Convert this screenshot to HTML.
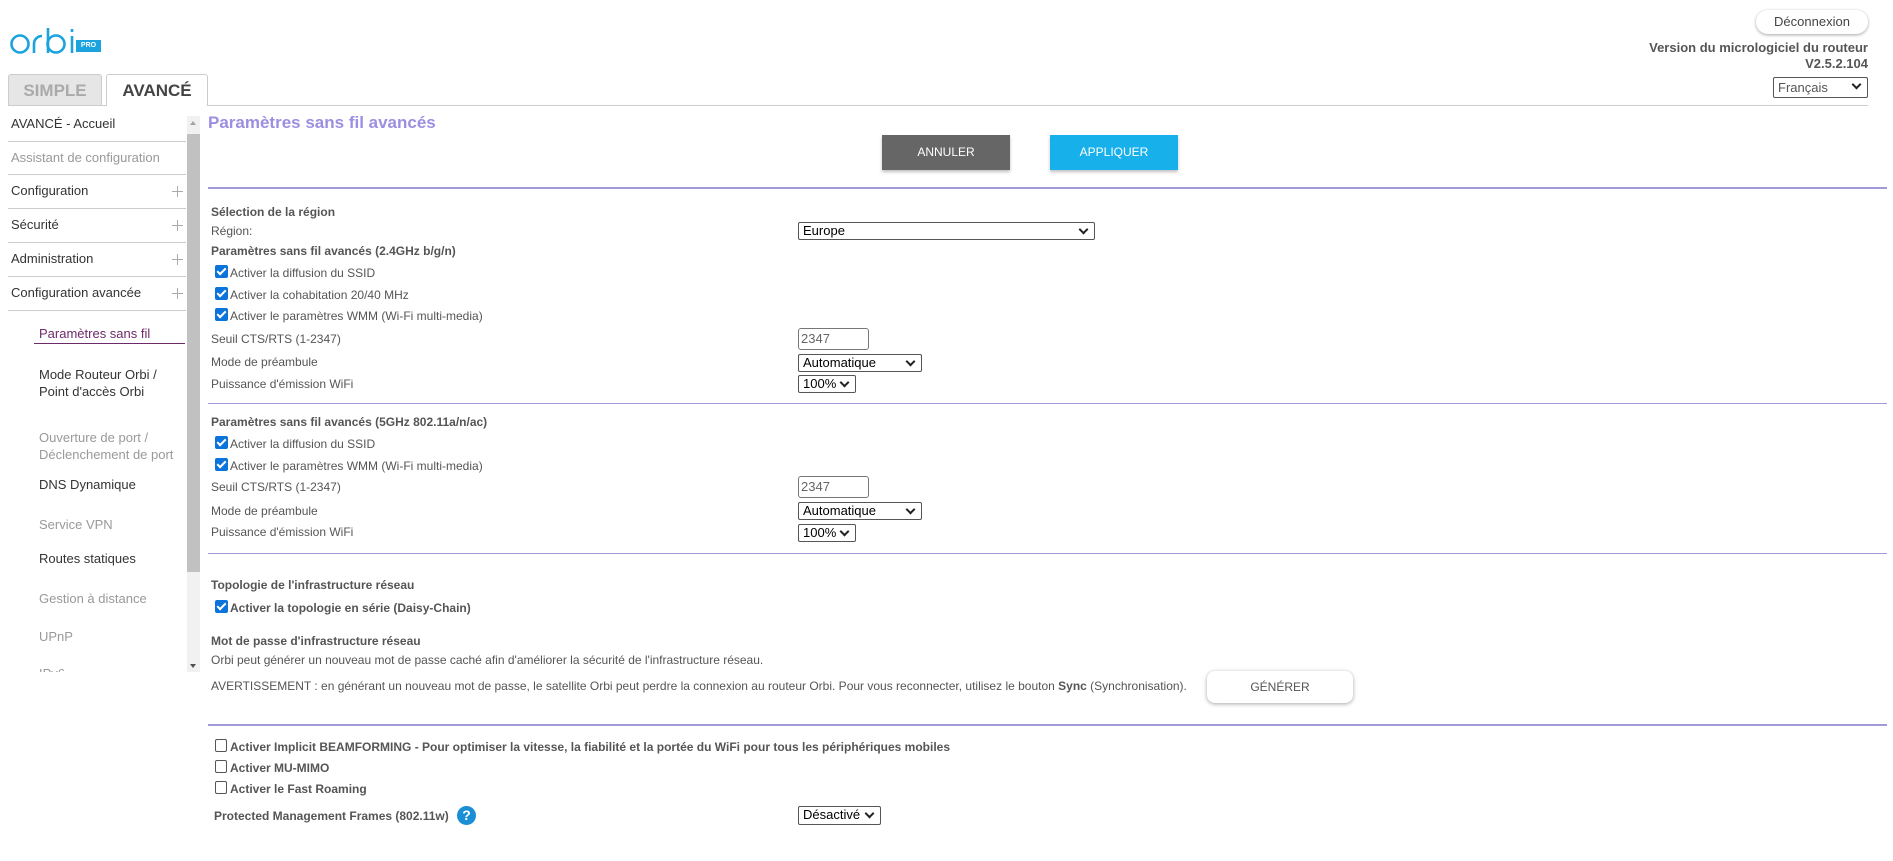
<!DOCTYPE html>
<html><head><meta charset="utf-8"><style>
*{box-sizing:border-box;margin:0;padding:0}
body{width:1893px;height:861px;background:#fff;font-family:"Liberation Sans",Arial,sans-serif;position:relative;overflow:hidden;color:#555}
.a{position:absolute;white-space:nowrap}
.t{font-size:12px;color:#555;line-height:14px}
.b{font-weight:bold}
.sb{font-size:13px;color:#333;left:11px}
.g{color:#999}
.sl{position:absolute;left:8px;width:178px;height:1px;background:#ccc}
.pl{position:absolute;left:172px;width:11px;height:11px}
.pl:before{content:"";position:absolute;left:5px;top:0;width:1px;height:11px;background:#aaa}
.pl:after{content:"";position:absolute;left:0;top:5px;width:11px;height:1px;background:#aaa}
.cb{position:absolute;width:13px;height:13px;border-radius:2px;background:#0a74da;left:215px}
.cb:after{content:"";position:absolute;left:4px;top:1px;width:3px;height:7px;border:solid #fff;border-width:0 2px 2px 0;transform:rotate(45deg)}
.ucb{position:absolute;width:12px;height:13px;border:1px solid #555;border-radius:2px;left:215px;background:#fff}
.sel{position:absolute;border:1px solid #555;border-radius:2px;font-size:13px;color:#000;padding-left:4px;line-height:16px;background:#fff}
.sel:after{content:"";position:absolute;right:7px;top:3px;width:5px;height:5px;border:solid #222;border-width:0 2px 2px 0;transform:rotate(45deg)}
.inp{position:absolute;border:1px solid #777;border-radius:3px;font-size:13px;color:#666;padding-left:2px;line-height:20px}
.hl{position:absolute;left:208px;width:1679px;background:#a09ad8}
</style></head><body>
<!-- logo -->
<svg class="a" style="left:10px;top:26px" width="68" height="30" viewBox="0 0 68 30" fill="none" stroke="#1aa3dc" stroke-width="2.6">
<circle cx="10" cy="18" r="8.5"/>
<path d="M24 27V18a8 8 0 0 1 8-8"/>
<path d="M38 2V27"/><circle cx="46" cy="18" r="8.5"/>
<path d="M62 10V27"/><path d="M62 3V6"/>
</svg>
<div class="a" style="left:76px;top:40px;width:25px;height:12px;background:#1aa3dc;color:#fff;font-size:7px;font-weight:bold;text-align:center;line-height:12px">PRO</div>
<!-- top right -->
<div class="a" style="left:1756px;top:10px;width:112px;height:24px;border-radius:12px;box-shadow:0 1px 3px rgba(0,0,0,.35);font-size:13px;color:#444;text-align:center;line-height:24px">Déconnexion</div>
<div class="a b" style="right:25px;top:40px;font-size:13px;color:#555;text-align:right;line-height:16px">Version du micrologiciel du routeur<br>V2.5.2.104</div>
<div class="sel" style="left:1773px;top:77px;width:95px;height:21px;color:#555;line-height:19px">Français</div>
<!-- tabs -->
<div class="a b" style="left:8px;top:74px;width:94px;height:32px;background:#e6e6e6;border:1px solid #ccc;border-bottom:none;border-radius:3px 3px 0 0;font-size:17px;color:#aaa;text-align:center;line-height:32px">SIMPLE</div>
<div class="a b" style="left:106px;top:74px;width:102px;height:32px;background:#fff;border:1px solid #ccc;border-bottom:none;border-radius:3px 3px 0 0;font-size:17px;color:#444;text-align:center;line-height:32px;z-index:2">AVANCÉ</div>
<div class="a" style="left:8px;top:105px;width:1860px;height:1px;background:#ccc"></div>
<!-- sidebar -->
<div class="a sb" style="top:116px">AVANCÉ - Accueil</div><div class="sl" style="top:141px"></div>
<div class="a sb g" style="top:150px">Assistant de configuration</div><div class="sl" style="top:174px"></div>
<div class="a sb" style="top:183px">Configuration</div><div class="pl" style="top:186px"></div><div class="sl" style="top:208px"></div>
<div class="a sb" style="top:217px">Sécurité</div><div class="pl" style="top:220px"></div><div class="sl" style="top:242px"></div>
<div class="a sb" style="top:251px">Administration</div><div class="pl" style="top:254px"></div><div class="sl" style="top:276px"></div>
<div class="a sb" style="top:285px">Configuration avancée</div><div class="pl" style="top:288px"></div><div class="sl" style="top:310px"></div>
<div class="a" style="left:39px;top:326px;font-size:13px;color:#6d2a6a">Paramètres sans fil</div>
<div class="a" style="left:34px;top:343px;width:151px;height:1px;background:#6d2a6a"></div>
<div class="a" style="left:39px;top:366px;font-size:13px;color:#333;line-height:17px">Mode Routeur Orbi /<br>Point d'accès Orbi</div>
<div class="a" style="left:39px;top:429px;font-size:13px;color:#999;line-height:17px">Ouverture de port /<br>Déclenchement de port</div>
<div class="a" style="left:39px;top:477px;font-size:13px;color:#333">DNS Dynamique</div>
<div class="a" style="left:39px;top:517px;font-size:13px;color:#999">Service VPN</div>
<div class="a" style="left:39px;top:551px;font-size:13px;color:#333">Routes statiques</div>
<div class="a" style="left:39px;top:591px;font-size:13px;color:#999">Gestion à distance</div>
<div class="a" style="left:39px;top:629px;font-size:13px;color:#999">UPnP</div>
<div class="a" style="left:39px;top:666px;font-size:13px;color:#999;height:6px;overflow:hidden">IPv6</div>
<div class="a" style="left:0;top:672px;width:200px;height:189px;background:#fff"></div>
<!-- scrollbar -->
<div class="a" style="left:187px;top:116px;width:13px;height:556px;background:#f1f1f1"></div>
<div class="a" style="left:187px;top:134px;width:13px;height:438px;background:#c1c1c1"></div>
<div class="a" style="left:190px;top:121px;border:3.5px solid transparent;border-bottom:4px solid #a3a3a3;border-top:none"></div>
<div class="a" style="left:190px;top:664px;border:3.5px solid transparent;border-top:4px solid #505050;border-bottom:none"></div>
<!-- main -->
<div class="a b" style="left:208px;top:113px;font-size:17px;color:#9c8fe2">Paramètres sans fil avancés</div>
<div class="a" style="left:882px;top:135px;width:128px;height:35px;background:#666;color:#fff;font-size:12px;text-align:center;line-height:35px;box-shadow:0 2px 3px rgba(0,0,0,.25)">ANNULER</div>
<div class="a" style="left:1050px;top:135px;width:128px;height:35px;background:#18b0ea;color:#fff;font-size:12px;text-align:center;line-height:35px;box-shadow:0 2px 3px rgba(0,0,0,.25)">APPLIQUER</div>
<div class="hl" style="top:187px;height:2px"></div>

<div class="a t b" style="left:211px;top:205px">Sélection de la région</div>
<div class="a t" style="left:211px;top:224px">Région:</div>
<div class="sel" style="left:798px;top:222px;width:297px;height:18px">Europe</div>
<div class="a t b" style="left:211px;top:244px">Paramètres sans fil avancés (2.4GHz b/g/n)</div>
<div class="cb" style="top:265px"></div><div class="a t" style="left:230px;top:266px">Activer la diffusion du SSID</div>
<div class="cb" style="top:287px"></div><div class="a t" style="left:230px;top:288px">Activer la cohabitation 20/40 MHz</div>
<div class="cb" style="top:308px"></div><div class="a t" style="left:230px;top:309px">Activer le paramètres WMM (Wi-Fi multi-media)</div>
<div class="a t" style="left:211px;top:332px">Seuil CTS/RTS (1-2347)</div>
<div class="inp" style="left:798px;top:328px;width:71px;height:22px">2347</div>
<div class="a t" style="left:211px;top:355px">Mode de préambule</div>
<div class="sel" style="left:798px;top:354px;width:124px;height:18px">Automatique</div>
<div class="a t" style="left:211px;top:377px">Puissance d'émission WiFi</div>
<div class="sel" style="left:798px;top:375px;width:58px;height:18px">100%</div>
<div class="hl" style="top:403px;height:1px"></div>

<div class="a t b" style="left:211px;top:415px">Paramètres sans fil avancés (5GHz 802.11a/n/ac)</div>
<div class="cb" style="top:436px"></div><div class="a t" style="left:230px;top:437px">Activer la diffusion du SSID</div>
<div class="cb" style="top:458px"></div><div class="a t" style="left:230px;top:459px">Activer le paramètres WMM (Wi-Fi multi-media)</div>
<div class="a t" style="left:211px;top:480px">Seuil CTS/RTS (1-2347)</div>
<div class="inp" style="left:798px;top:476px;width:71px;height:22px">2347</div>
<div class="a t" style="left:211px;top:504px">Mode de préambule</div>
<div class="sel" style="left:798px;top:502px;width:124px;height:18px">Automatique</div>
<div class="a t" style="left:211px;top:525px">Puissance d'émission WiFi</div>
<div class="sel" style="left:798px;top:524px;width:58px;height:18px">100%</div>
<div class="hl" style="top:553px;height:1px"></div>

<div class="a t b" style="left:211px;top:578px">Topologie de l'infrastructure réseau</div>
<div class="cb" style="top:600px"></div><div class="a t b" style="left:230px;top:601px">Activer la topologie en série (Daisy-Chain)</div>
<div class="a t b" style="left:211px;top:634px">Mot de passe d'infrastructure réseau</div>
<div class="a t" style="left:211px;top:653px">Orbi peut générer un nouveau mot de passe caché afin d'améliorer la sécurité de l'infrastructure réseau.</div>
<div class="a t" style="left:211px;top:679px">AVERTISSEMENT : en générant un nouveau mot de passe, le satellite Orbi peut perdre la connexion au routeur Orbi. Pour vous reconnecter, utilisez le bouton <b>Sync</b> (Synchronisation).</div>
<div class="a" style="left:1207px;top:671px;width:146px;height:32px;border-radius:8px;box-shadow:0 1px 4px rgba(0,0,0,.35);font-size:12px;color:#555;text-align:center;line-height:32px;background:#fff">GÉNÉRER</div>
<div class="hl" style="top:724px;height:2px"></div>

<div class="ucb" style="top:739px"></div><div class="a t b" style="left:230px;top:740px">Activer Implicit BEAMFORMING - Pour optimiser la vitesse, la fiabilité et la portée du WiFi pour tous les périphériques mobiles</div>
<div class="ucb" style="top:760px"></div><div class="a t b" style="left:230px;top:761px">Activer MU-MIMO</div>
<div class="ucb" style="top:781px"></div><div class="a t b" style="left:230px;top:782px">Activer le Fast Roaming</div>
<div class="a t b" style="left:214px;top:809px">Protected Management Frames (802.11w)</div>
<div class="a" style="left:457px;top:806px;width:19px;height:19px;border-radius:50%;background:#1a8fd6;color:#fff;font-size:14px;font-weight:bold;text-align:center;line-height:19px">?</div>
<div class="sel" style="left:798px;top:806px;width:83px;height:19px">Désactivé</div>
</body></html>
